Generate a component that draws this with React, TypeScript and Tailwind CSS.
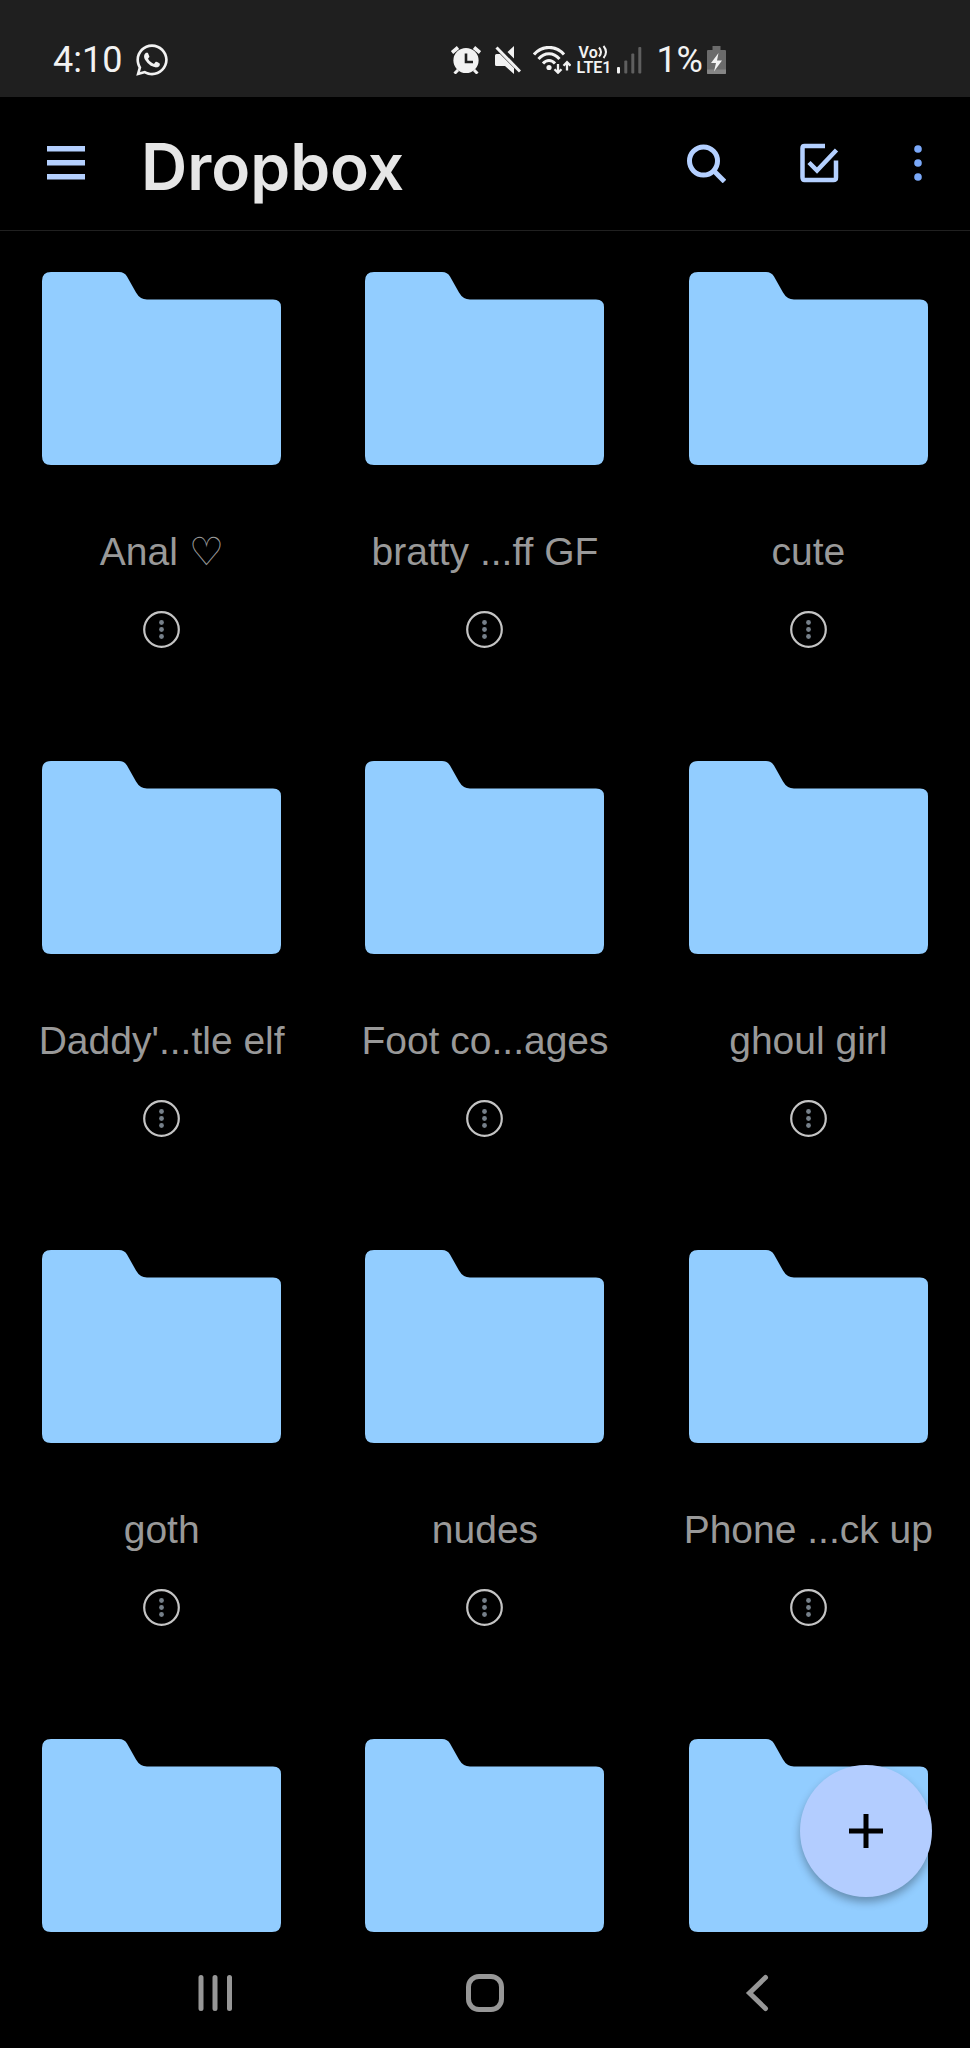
import React from 'react';
import { FaWhatsapp } from 'react-icons/fa';

interface FolderItem {
  id: number;
  name?: string;
}

const folders: FolderItem[] = [
  { id: 1, name: 'Anal ♡' },
  { id: 2, name: 'bratty ...ff GF' },
  { id: 3, name: 'cute' },
  { id: 4, name: "Daddy'...tle elf" },
  { id: 5, name: 'Foot co...ages' },
  { id: 6, name: 'ghoul girl' },
  { id: 7, name: 'goth' },
  { id: 8, name: 'nudes' },
  { id: 9, name: 'Phone ...ck up' },
  // last row, names still below the fold
  { id: 10 },
  { id: 11 },
  { id: 12 },
];

const StatusBar: React.FC = () => (
  <div className="flex h-[97px] shrink-0 items-center justify-between bg-[#1f1f1f] pt-[22px] pr-[244px] pl-[53px] font-[Roboto,sans-serif] text-[#f2f2f2]">
    <div className="flex items-center gap-3">
      <span className="text-[36px] leading-none">4:10</span>
      <FaWhatsapp className="size-9" />
    </div>
    <div className="flex items-center">
      <svg viewBox="0 0 30 28" className="mr-3.5 h-7 w-[30px]" fill="none" stroke="currentColor" strokeWidth="3.6">
        <circle cx="15" cy="14.5" r="12.6" fill="currentColor" stroke="none" />
        <path d="M1 6.5 7 1.5M23 1.5l6 5" />
        <path d="M7 24l-3.5 3.5M23 24l3.5 3.5" strokeWidth="3" />
        <path d="M15 7.5v8.5h7" stroke="#1f1f1f" strokeWidth="2.6" />
      </svg>
      <svg viewBox="0 0 26 28" className="mr-3 h-7 w-[26px]" fill="currentColor">
        <path d="M0 9.5Q0 8 1.500 8H5L19 22v6l-9-8H1.500Q0 20 0 18.500zM19 0v12.500L12.500 6z" />
        <path d="M1.500 1.500 25 25.500" stroke="currentColor" strokeWidth="3" />
      </svg>
      <svg viewBox="0 0 38 28" className="mr-1.5 h-7 w-[38px]" fill="none" stroke="currentColor" strokeWidth="3">
        <path d="M1 8.500C9-1 23-1 31 8.500M5.500 13c6-7 15-7 21 0M10 17.500c3.500-4 8.500-4 12 0" />
        <circle cx="16" cy="21.500" r="2.600" fill="currentColor" stroke="none" />
        <path d="M25 18v8.500M21.500 23.200 25 26.700l3.500-3.500M34 24.500V16.500M30.500 19.700 34 16.200l3.500 3.500" strokeWidth="2.300" />
      </svg>
      <div className="mr-1.5 flex flex-col font-semibold">
        <span className="flex items-center pl-0.5 text-[16px] leading-[15px]">
          Vo
          <svg viewBox="0 0 10 14" className="h-3.5 w-2.5" fill="none" stroke="currentColor" strokeWidth="2">
            <path d="M1 2.500q4 4.500 0 9M5.500 1q5 6 0 12" />
          </svg>
        </span>
        <span className="text-[16px] leading-[15px]">LTE1</span>
      </div>
      <svg viewBox="0 0 25 28" className="mr-3.5 h-7 w-[25px]" fill="#5f5f5f">
        <rect x="0" y="21" width="3" height="6.500" rx="1" fill="#f2f2f2" />
        <rect x="7.300" y="14.500" width="3" height="13" rx="1" />
        <rect x="14.300" y="7.500" width="3" height="20" rx="1" />
        <rect x="21.300" y="1" width="3" height="26.500" rx="1" />
      </svg>
      <span className="mr-1 text-[36px] leading-none">1%</span>
      <svg viewBox="0 0 19 28" className="h-7 w-[19px]">
        <path d="M5.500 0h8v4H18q1 0 1 1v22q0 1-1 1H1q-1 0-1-1V5q0-1 1-1h4.500z" fill="#6b6b6b" />
        <path d="M0 23.500h19V27q0 1-1 1H1q-1 0-1-1z" fill="#858585" />
        <path d="M11.500 7 4 17h5l-2 8.500L15 14.500h-5z" fill="#f2f2f2" />
      </svg>
    </div>
  </div>
);

const AppBar: React.FC = () => (
  <header className="flex h-[134px] shrink-0 items-center border-b border-[#202020] pr-12 pb-0.5 pl-[47px] text-[#b4d0ff]">
    <button aria-label="Menu">
      <svg viewBox="0 0 38 34" className="h-[34px] w-[38px]" fill="currentColor">
        <path d="M0 0h38v5.500H0zM0 14h38v5.500H0zM0 28h38v5.500H0z" />
      </svg>
    </button>
    <h1 className="mt-2 ml-14 font-[Inter,sans-serif] text-[64px] leading-[72px] font-semibold text-[#e6e6e6]">Dropbox</h1>
    <div className="ml-auto flex items-center gap-[74px]">
      <button aria-label="Search">
        <svg viewBox="0 0 40 40" className="size-10" fill="none" stroke="currentColor" strokeWidth="5">
          <circle cx="17.500" cy="18" r="14" />
          <path d="M27.500 27.500 38.500 38.500" />
        </svg>
      </button>
      <button aria-label="Select">
        <svg viewBox="0 0 40 40" className="size-10" fill="none" stroke="currentColor" strokeWidth="4.500">
          <path d="M25 3H4.500Q2.500 3 2.500 5v29Q2.500 37 4.500 37h29Q36 37 36 34.500V17.500" />
          <path d="M9 19.500l8 8L36.500 7" />
        </svg>
      </button>
      <button aria-label="More options">
        <svg viewBox="0 0 8 36" className="h-9 w-2" fill="#7ba9fa">
          <circle cx="4" cy="4" r="3.800" />
          <circle cx="4" cy="18" r="3.800" />
          <circle cx="4" cy="32" r="3.800" />
        </svg>
      </button>
    </div>
  </header>
);

const FolderCell: React.FC<{ folder: FolderItem }> = ({ folder }) => (
  <li className="flex flex-col items-center">
    <svg viewBox="0 0 239 193" className="h-[193px] w-[239px]" fill="#92cdff">
      <path d="M9 0H77Q82.500 0 85 4.500L94 20.500Q98 27.500 105 27.500H231Q239 27.500 239 35V184Q239 193 230 193H9Q0 193 0 184V9Q0 0 9 0Z" />
    </svg>
    {folder.name && (
      <>
        <span className="mt-[63px] font-['Liberation_Sans','DejaVu_Sans',sans-serif] text-[39px] leading-[48px] whitespace-nowrap text-[#999999]">
          {folder.name}
        </span>
        <button aria-label={`Options for ${folder.name}`} className="mt-[35px] mb-[113px]">
          <svg viewBox="0 0 37 37" className="size-[37px]">
            <circle cx="18.500" cy="18.500" r="17.300" fill="none" stroke="#c4c4c4" strokeWidth="2.200" />
            <g fill="#76808a">
              <circle cx="18.500" cy="11.500" r="2.400" />
              <circle cx="18.500" cy="18.500" r="2.400" />
              <circle cx="18.500" cy="25.500" r="2.400" />
            </g>
          </svg>
        </button>
      </>
    )}
  </li>
);

const NavBar: React.FC = () => (
  <nav className="mt-auto grid h-[111px] shrink-0 grid-cols-3 place-items-center px-20 text-[#979797]">
    <button aria-label="Recent apps">
      <svg viewBox="0 0 38 38" className="size-[38px]" fill="none" stroke="currentColor" strokeWidth="5" strokeLinecap="round">
        <path d="M5 3.500v31M19 3.500v31M33.500 3.500v31" />
      </svg>
    </button>
    <button aria-label="Home">
      <svg viewBox="0 0 38 38" className="size-[38px]" fill="none" stroke="currentColor" strokeWidth="5">
        <rect x="2.500" y="2.500" width="33" height="33" rx="10.500" />
      </svg>
    </button>
    <button aria-label="Back">
      <svg viewBox="0 0 38 38" className="size-[38px]" fill="none" stroke="currentColor" strokeWidth="5" strokeLinecap="round">
        <path d="M29.500 3.500 13.500 19l16 15.500" />
      </svg>
    </button>
  </nav>
);

const App: React.FC = () => {
  return (
    <div className="flex min-h-screen flex-col bg-black">
      <StatusBar />
      <AppBar />
      <main className="pt-[41px]">
        <ul className="grid grid-cols-3">
          {folders.map((folder) => (
            <FolderCell key={folder.id} folder={folder} />
          ))}
        </ul>
      </main>
      <button
        aria-label="Add"
        className="fixed right-[38px] bottom-[151px] flex size-[132px] items-center justify-center rounded-full bg-[#b3cdff] shadow-[0_5px_8px_rgba(0,0,0,0.3)]"
      >
        <svg viewBox="0 0 34 34" className="size-[34px]" fill="#000000">
          <path d="M14.500 0h5v14.500H34v5H19.500V34h-5V19.500H0v-5h14.500z" />
        </svg>
      </button>
      <NavBar />
    </div>
  );
};

export default App;
